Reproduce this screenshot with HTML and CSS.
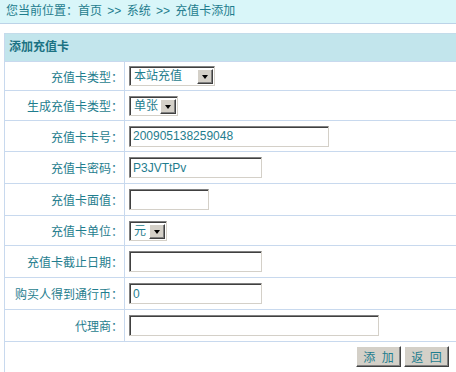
FILE: index.html
```html
<!DOCTYPE html>
<html lang="zh-CN">
<head>
<meta charset="utf-8">
<title>充值卡添加</title>
<link rel="stylesheet" href="styles.css">
</head>
<body>
<div class="crumb">您当前位置：首页 &gt;&gt; 系统 &gt;&gt; 充值卡添加</div>
<div class="form">
  <div class="head">添加充值卡</div>
  <div class="row h29">
    <div class="lbl">充值卡类型：</div>
    <div class="val"><span class="sel w85"><span class="opt">本站充值</span><span class="btn"><span class="tri"></span></span></span></div>
  </div>
  <div class="row h30">
    <div class="lbl">生成充值卡类型：</div>
    <div class="val"><span class="sel w49"><span class="opt">单张</span><span class="btn"><span class="tri"></span></span></span></div>
  </div>
  <div class="row h31">
    <div class="lbl">充值卡卡号：</div>
    <div class="val"><input class="txt w200" type="text" value="200905138259048"></div>
  </div>
  <div class="row h32">
    <div class="lbl">充值卡密码：</div>
    <div class="val"><input class="txt w133" type="text" value="P3JVTtPv"></div>
  </div>
  <div class="row h32">
    <div class="lbl">充值卡面值：</div>
    <div class="val"><input class="txt w80" type="text" value=""></div>
  </div>
  <div class="row h30">
    <div class="lbl">充值卡单位：</div>
    <div class="val"><span class="sel w37"><span class="opt">元</span><span class="btn"><span class="tri"></span></span></span></div>
  </div>
  <div class="row h32">
    <div class="lbl">充值卡截止日期：</div>
    <div class="val"><input class="txt w133" type="text" value=""></div>
  </div>
  <div class="row h32">
    <div class="lbl">购买人得到通行币：</div>
    <div class="val"><input class="txt w133" type="text" value="0"></div>
  </div>
  <div class="row h32">
    <div class="lbl">代理商：</div>
    <div class="val"><input class="txt w250" type="text" value=""></div>
  </div>
  <div class="foot">
    <button class="pbtn" type="button">添 加</button>
    <button class="pbtn" type="button">返 回</button>
  </div>
</div>
</body>
</html>
```
FILE: styles.css
```css
html, body {
  margin: 0;
  padding: 0;
  background: #ffffff;
  overflow: hidden;
}
body {
  font-family: "Liberation Sans", "Noto Sans CJK SC", sans-serif;
  font-size: 12px;
  color: #1f7d8e;
}
.crumb {
  height: 23px;
  line-height: 23px;
  padding-left: 6px;
  background: #d9f6f9;
  border-bottom: 1px solid #bcd3e8;
  white-space: nowrap;
  word-spacing: 2px;
}
.form {
  margin: 9px 0 0 4px;
  border-top: 1px solid #c3dcea;
  border-left: 1px solid #c8d9ee;
}
.head {
  box-sizing: border-box;
  height: 28px;
  line-height: 27px;
  padding-left: 4px;
  background: #c2e5ec;
  border-bottom: 1px solid #c8d9ee;
  font-weight: bold;
  color: #1b7283;
}
.row {
  display: flex;
  box-sizing: border-box;
  border-bottom: 1px solid #c8d9ee;
}
.h29 { height: 29px; }
.h30 { height: 30px; }
.h31 { height: 31px; }
.h32 { height: 32px; }
.lbl {
  box-sizing: border-box;
  width: 120px;
  flex: none;
  border-right: 1px solid #c8d9ee;
  padding-right: 1px;
  display: flex;
  align-items: center;
  justify-content: flex-end;
  white-space: nowrap;
}
.val {
  flex: 1;
  display: flex;
  align-items: center;
  padding-left: 4px;
}
.txt {
  box-sizing: border-box;
  height: 21px;
  margin: 0;
  padding: 0 0 0 3px;
  border-top: 1px solid #808080;
  border-left: 1px solid #808080;
  border-right: 1px solid #d4d0c8;
  border-bottom: 1px solid #d4d0c8;
  box-shadow: inset 1px 1px 0 #404040;
  background: #fff;
  font-family: "Liberation Sans", "Noto Sans CJK SC", sans-serif;
  font-size: 12px;
  color: #1f7d8e;
  outline: none;
}
.w80 { width: 80px; }
.w133 { width: 133px; }
.w200 { width: 200px; }
.w250 { width: 250px; }
.sel {
  box-sizing: border-box;
  display: inline-flex;
  height: 20px;
  border-top: 1px solid #808080;
  border-left: 1px solid #808080;
  border-right: 1px solid #d4d0c8;
  border-bottom: 1px solid #d4d0c8;
  box-shadow: inset 1px 1px 0 #404040;
  background: #fff;
  padding: 2px 1px 1px 2px;
}
.w85 { width: 86px; }
.w49 { width: 49px; }
.w37 { width: 38px; }
.opt {
  flex: 1;
  line-height: 15px;
  padding-left: 2px;
  white-space: nowrap;
  overflow: hidden;
}
.btn {
  box-sizing: border-box;
  width: 16px;
  flex: none;
  background: #d4d0c8;
  border-top: 1px solid #ffffff;
  border-left: 1px solid #ffffff;
  border-right: 1px solid #404040;
  border-bottom: 1px solid #404040;
  box-shadow: inset -1px -1px 0 #808080;
  display: flex;
  align-items: center;
  justify-content: center;
}
.tri {
  width: 0;
  height: 0;
  border-left: 3.5px solid transparent;
  border-right: 3.5px solid transparent;
  border-top: 4px solid #000;
  margin-top: 1px;
}
.foot {
  display: flex;
  justify-content: flex-end;
  gap: 3px;
  padding: 4px 7px 0 0;
  height: 40px;
  box-sizing: border-box;
}
.pbtn {
  box-sizing: border-box;
  width: 45px;
  height: 21px;
  margin: 0;
  padding: 0;
  background: #d4d0c8;
  border-top: 1px solid #ffffff;
  border-left: 1px solid #ffffff;
  border-right: 1px solid #404040;
  border-bottom: 1px solid #404040;
  box-shadow: inset -1px -1px 0 #808080;
  font-family: "Liberation Sans", "Noto Sans CJK SC", sans-serif;
  font-size: 12px;
  color: #1f7d8e;
  word-spacing: 3px;
}
```
